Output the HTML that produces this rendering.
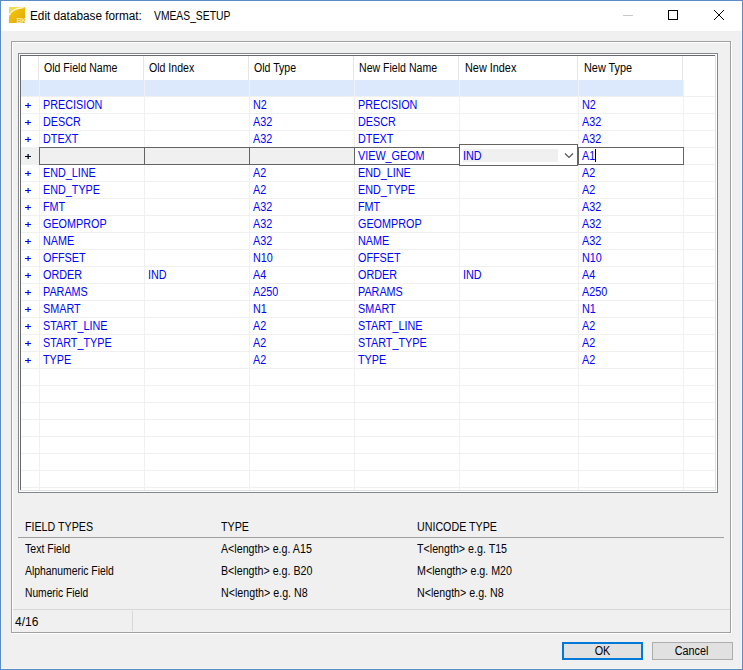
<!DOCTYPE html><html><head><meta charset="utf-8"><style>
*{margin:0;padding:0;box-sizing:border-box}
html,body{width:743px;height:670px;overflow:hidden;background:#f0f0f0}
body{position:relative;font-family:"Liberation Sans",sans-serif;font-size:11px;color:#000}
.ab{position:absolute}
.t{position:absolute;white-space:nowrap;line-height:1}
.gt{font-size:12px;color:#0000ff;transform-origin:0 0;transform:scaleX(0.9)}
.ht{font-size:12px;color:#000;transform-origin:0 0;transform:scaleX(0.88)}
.bt{font-size:12px;color:#000;transform-origin:0 0;transform:scaleX(0.89)}
</style></head><body>
<div class="ab" style="left:0;top:0;width:743px;height:670px;border:1px solid #5b8cc8"></div>
<div class="ab" style="left:1px;top:1px;width:741px;height:668px;border-left:1px solid #f7f4f0;border-right:1px solid #f7f4f0;border-bottom:1px solid #f7f4f0"></div>
<div class="ab" style="left:1px;top:1px;width:741px;height:30px;background:#fff"></div>
<svg class="ab" style="left:9px;top:7px" width="16" height="16" viewBox="0 0 16 16">
<defs><linearGradient id="ig" x1="0" y1="0" x2="1" y2="1"><stop offset="0" stop-color="#f8da48"/><stop offset="1" stop-color="#f4d040"/></linearGradient>
<linearGradient id="ig2" x1="0.1" y1="0.1" x2="0.9" y2="1"><stop offset="0" stop-color="#f4c808"/><stop offset="1" stop-color="#e2a600"/></linearGradient></defs>
<rect x="0" y="0" width="16" height="16" fill="url(#ig)"/>
<path d="M0 8.8 Q3.0 1.8 16 0.6 L16 16 L0 16 Z" fill="url(#ig2)"/>
<path d="M0.2 8.3 Q3.0 1.4 14.5 0.6" stroke="#ffffff" stroke-width="1.3" fill="none" opacity="0.9"/>
<text x="7.6" y="15.8" font-family="Liberation Sans" font-weight="bold" font-size="7" fill="#fff4dc" opacity="0.85" letter-spacing="-0.4">BK</text>
</svg>
<div class="t" style="left:30px;top:10px;font-size:12px;color:#000;transform-origin:0 0;transform:scaleX(0.98)">Edit database format:</div>
<div class="t" style="left:154px;top:10px;font-size:12px;color:#000;transform-origin:0 0;transform:scaleX(0.86)">VMEAS_SETUP</div>
<div class="ab" style="left:623px;top:15px;width:10px;height:1px;background:#c8c8c8"></div>
<div class="ab" style="left:668px;top:10px;width:10px;height:10px;border:1px solid #000"></div>
<svg class="ab" style="left:713px;top:9px" width="12" height="12" viewBox="0 0 12 12"><path d="M1 1L11 11M11 1L1 11" stroke="#000" stroke-width="1"/></svg>
<div class="ab" style="left:12px;top:42px;width:720px;height:592px;border:1px solid #fff"></div>
<div class="ab" style="left:11px;top:41px;width:720px;height:592px;border:1px solid #a0a0a0"></div>
<div class="ab" style="left:18px;top:53px;width:700px;height:440px;border:1px solid #828790;background:#fff"></div>
<div class="ab" style="left:20px;top:55px;width:695px;height:1px;background:#696969"></div>
<div class="ab" style="left:20px;top:55px;width:1px;height:435px;background:#696969"></div>
<div class="ab" style="left:715px;top:55px;width:1px;height:436px;background:#e3e3e3"></div>
<div class="ab" style="left:20px;top:490px;width:696px;height:1px;background:#e3e3e3"></div>
<div class="ab" style="left:38px;top:56px;width:1px;height:24px;background:#e5e5e5"></div>
<div class="ab" style="left:143px;top:56px;width:1px;height:24px;background:#e5e5e5"></div>
<div class="ab" style="left:248px;top:56px;width:1px;height:24px;background:#e5e5e5"></div>
<div class="ab" style="left:353px;top:56px;width:1px;height:24px;background:#e5e5e5"></div>
<div class="ab" style="left:458px;top:56px;width:1px;height:24px;background:#e5e5e5"></div>
<div class="ab" style="left:577px;top:56px;width:1px;height:24px;background:#e5e5e5"></div>
<div class="ab" style="left:682px;top:56px;width:1px;height:24px;background:#e5e5e5"></div>
<div class="ab" style="left:21px;top:80px;width:662px;height:16px;background:#dce8fc"></div>
<div class="ab" style="left:21px;top:96px;width:694px;height:1px;background:#f0f0f0"></div>
<div class="ab" style="left:21px;top:113px;width:694px;height:1px;background:#f0f0f0"></div>
<div class="ab" style="left:21px;top:130px;width:694px;height:1px;background:#f0f0f0"></div>
<div class="ab" style="left:21px;top:147px;width:694px;height:1px;background:#f0f0f0"></div>
<div class="ab" style="left:21px;top:164px;width:694px;height:1px;background:#f0f0f0"></div>
<div class="ab" style="left:21px;top:181px;width:694px;height:1px;background:#f0f0f0"></div>
<div class="ab" style="left:21px;top:198px;width:694px;height:1px;background:#f0f0f0"></div>
<div class="ab" style="left:21px;top:215px;width:694px;height:1px;background:#f0f0f0"></div>
<div class="ab" style="left:21px;top:232px;width:694px;height:1px;background:#f0f0f0"></div>
<div class="ab" style="left:21px;top:249px;width:694px;height:1px;background:#f0f0f0"></div>
<div class="ab" style="left:21px;top:266px;width:694px;height:1px;background:#f0f0f0"></div>
<div class="ab" style="left:21px;top:283px;width:694px;height:1px;background:#f0f0f0"></div>
<div class="ab" style="left:21px;top:300px;width:694px;height:1px;background:#f0f0f0"></div>
<div class="ab" style="left:21px;top:317px;width:694px;height:1px;background:#f0f0f0"></div>
<div class="ab" style="left:21px;top:334px;width:694px;height:1px;background:#f0f0f0"></div>
<div class="ab" style="left:21px;top:351px;width:694px;height:1px;background:#f0f0f0"></div>
<div class="ab" style="left:21px;top:368px;width:694px;height:1px;background:#f0f0f0"></div>
<div class="ab" style="left:21px;top:385px;width:694px;height:1px;background:#f0f0f0"></div>
<div class="ab" style="left:21px;top:402px;width:694px;height:1px;background:#f0f0f0"></div>
<div class="ab" style="left:21px;top:419px;width:694px;height:1px;background:#f0f0f0"></div>
<div class="ab" style="left:21px;top:436px;width:694px;height:1px;background:#f0f0f0"></div>
<div class="ab" style="left:21px;top:453px;width:694px;height:1px;background:#f0f0f0"></div>
<div class="ab" style="left:21px;top:470px;width:694px;height:1px;background:#f0f0f0"></div>
<div class="ab" style="left:21px;top:487px;width:694px;height:1px;background:#f0f0f0"></div>
<div class="ab" style="left:39px;top:80px;width:1px;height:410px;background:#f0f0f0"></div>
<div class="ab" style="left:144px;top:80px;width:1px;height:410px;background:#f0f0f0"></div>
<div class="ab" style="left:249px;top:80px;width:1px;height:410px;background:#f0f0f0"></div>
<div class="ab" style="left:354px;top:80px;width:1px;height:410px;background:#f0f0f0"></div>
<div class="ab" style="left:459px;top:80px;width:1px;height:410px;background:#f0f0f0"></div>
<div class="ab" style="left:578px;top:80px;width:1px;height:410px;background:#f0f0f0"></div>
<div class="ab" style="left:683px;top:80px;width:1px;height:410px;background:#f0f0f0"></div>
<div class="t ht" style="left:44px;top:62px;transform:scaleX(0.88)">Old Field Name</div>
<div class="t ht" style="left:149px;top:62px;transform:scaleX(0.88)">Old Index</div>
<div class="t ht" style="left:254px;top:62px;transform:scaleX(0.88)">Old Type</div>
<div class="t ht" style="left:359px;top:62px;transform:scaleX(0.88)">New Field Name</div>
<div class="t ht" style="left:465px;top:62px;transform:scaleX(0.905)">New Index</div>
<div class="t ht" style="left:584px;top:62px;transform:scaleX(0.905)">New Type</div>
<div class="ab" style="left:27px;top:103px;width:1px;height:5px;background:#9a80ff"></div>
<div class="ab" style="left:28px;top:103px;width:1px;height:5px;background:#2868ff"></div>
<div class="ab" style="left:25px;top:105px;width:6px;height:1px;background:#0000ff"></div>
<div class="t gt" style="left:43px;top:99px">PRECISION</div>
<div class="t gt" style="left:253px;top:99px">N2</div>
<div class="t gt" style="left:358px;top:99px">PRECISION</div>
<div class="t gt" style="left:582px;top:99px">N2</div>
<div class="ab" style="left:27px;top:120px;width:1px;height:5px;background:#9a80ff"></div>
<div class="ab" style="left:28px;top:120px;width:1px;height:5px;background:#2868ff"></div>
<div class="ab" style="left:25px;top:122px;width:6px;height:1px;background:#0000ff"></div>
<div class="t gt" style="left:43px;top:116px">DESCR</div>
<div class="t gt" style="left:253px;top:116px">A32</div>
<div class="t gt" style="left:358px;top:116px">DESCR</div>
<div class="t gt" style="left:582px;top:116px">A32</div>
<div class="ab" style="left:27px;top:137px;width:1px;height:5px;background:#9a80ff"></div>
<div class="ab" style="left:28px;top:137px;width:1px;height:5px;background:#2868ff"></div>
<div class="ab" style="left:25px;top:139px;width:6px;height:1px;background:#0000ff"></div>
<div class="t gt" style="left:43px;top:133px">DTEXT</div>
<div class="t gt" style="left:253px;top:133px">A32</div>
<div class="t gt" style="left:358px;top:133px">DTEXT</div>
<div class="t gt" style="left:582px;top:133px">A32</div>
<div class="ab" style="left:27px;top:171px;width:1px;height:5px;background:#9a80ff"></div>
<div class="ab" style="left:28px;top:171px;width:1px;height:5px;background:#2868ff"></div>
<div class="ab" style="left:25px;top:173px;width:6px;height:1px;background:#0000ff"></div>
<div class="t gt" style="left:43px;top:167px">END_LINE</div>
<div class="t gt" style="left:253px;top:167px">A2</div>
<div class="t gt" style="left:358px;top:167px">END_LINE</div>
<div class="t gt" style="left:582px;top:167px">A2</div>
<div class="ab" style="left:27px;top:188px;width:1px;height:5px;background:#9a80ff"></div>
<div class="ab" style="left:28px;top:188px;width:1px;height:5px;background:#2868ff"></div>
<div class="ab" style="left:25px;top:190px;width:6px;height:1px;background:#0000ff"></div>
<div class="t gt" style="left:43px;top:184px">END_TYPE</div>
<div class="t gt" style="left:253px;top:184px">A2</div>
<div class="t gt" style="left:358px;top:184px">END_TYPE</div>
<div class="t gt" style="left:582px;top:184px">A2</div>
<div class="ab" style="left:27px;top:205px;width:1px;height:5px;background:#9a80ff"></div>
<div class="ab" style="left:28px;top:205px;width:1px;height:5px;background:#2868ff"></div>
<div class="ab" style="left:25px;top:207px;width:6px;height:1px;background:#0000ff"></div>
<div class="t gt" style="left:43px;top:201px">FMT</div>
<div class="t gt" style="left:253px;top:201px">A32</div>
<div class="t gt" style="left:358px;top:201px">FMT</div>
<div class="t gt" style="left:582px;top:201px">A32</div>
<div class="ab" style="left:27px;top:222px;width:1px;height:5px;background:#9a80ff"></div>
<div class="ab" style="left:28px;top:222px;width:1px;height:5px;background:#2868ff"></div>
<div class="ab" style="left:25px;top:224px;width:6px;height:1px;background:#0000ff"></div>
<div class="t gt" style="left:43px;top:218px">GEOMPROP</div>
<div class="t gt" style="left:253px;top:218px">A32</div>
<div class="t gt" style="left:358px;top:218px">GEOMPROP</div>
<div class="t gt" style="left:582px;top:218px">A32</div>
<div class="ab" style="left:27px;top:239px;width:1px;height:5px;background:#9a80ff"></div>
<div class="ab" style="left:28px;top:239px;width:1px;height:5px;background:#2868ff"></div>
<div class="ab" style="left:25px;top:241px;width:6px;height:1px;background:#0000ff"></div>
<div class="t gt" style="left:43px;top:235px">NAME</div>
<div class="t gt" style="left:253px;top:235px">A32</div>
<div class="t gt" style="left:358px;top:235px">NAME</div>
<div class="t gt" style="left:582px;top:235px">A32</div>
<div class="ab" style="left:27px;top:256px;width:1px;height:5px;background:#9a80ff"></div>
<div class="ab" style="left:28px;top:256px;width:1px;height:5px;background:#2868ff"></div>
<div class="ab" style="left:25px;top:258px;width:6px;height:1px;background:#0000ff"></div>
<div class="t gt" style="left:43px;top:252px">OFFSET</div>
<div class="t gt" style="left:253px;top:252px">N10</div>
<div class="t gt" style="left:358px;top:252px">OFFSET</div>
<div class="t gt" style="left:582px;top:252px">N10</div>
<div class="ab" style="left:27px;top:273px;width:1px;height:5px;background:#9a80ff"></div>
<div class="ab" style="left:28px;top:273px;width:1px;height:5px;background:#2868ff"></div>
<div class="ab" style="left:25px;top:275px;width:6px;height:1px;background:#0000ff"></div>
<div class="t gt" style="left:43px;top:269px">ORDER</div>
<div class="t gt" style="left:148px;top:269px">IND</div>
<div class="t gt" style="left:253px;top:269px">A4</div>
<div class="t gt" style="left:358px;top:269px">ORDER</div>
<div class="t gt" style="left:463px;top:269px">IND</div>
<div class="t gt" style="left:582px;top:269px">A4</div>
<div class="ab" style="left:27px;top:290px;width:1px;height:5px;background:#9a80ff"></div>
<div class="ab" style="left:28px;top:290px;width:1px;height:5px;background:#2868ff"></div>
<div class="ab" style="left:25px;top:292px;width:6px;height:1px;background:#0000ff"></div>
<div class="t gt" style="left:43px;top:286px">PARAMS</div>
<div class="t gt" style="left:253px;top:286px">A250</div>
<div class="t gt" style="left:358px;top:286px">PARAMS</div>
<div class="t gt" style="left:582px;top:286px">A250</div>
<div class="ab" style="left:27px;top:307px;width:1px;height:5px;background:#9a80ff"></div>
<div class="ab" style="left:28px;top:307px;width:1px;height:5px;background:#2868ff"></div>
<div class="ab" style="left:25px;top:309px;width:6px;height:1px;background:#0000ff"></div>
<div class="t gt" style="left:43px;top:303px">SMART</div>
<div class="t gt" style="left:253px;top:303px">N1</div>
<div class="t gt" style="left:358px;top:303px">SMART</div>
<div class="t gt" style="left:582px;top:303px">N1</div>
<div class="ab" style="left:27px;top:324px;width:1px;height:5px;background:#9a80ff"></div>
<div class="ab" style="left:28px;top:324px;width:1px;height:5px;background:#2868ff"></div>
<div class="ab" style="left:25px;top:326px;width:6px;height:1px;background:#0000ff"></div>
<div class="t gt" style="left:43px;top:320px">START_LINE</div>
<div class="t gt" style="left:253px;top:320px">A2</div>
<div class="t gt" style="left:358px;top:320px">START_LINE</div>
<div class="t gt" style="left:582px;top:320px">A2</div>
<div class="ab" style="left:27px;top:341px;width:1px;height:5px;background:#9a80ff"></div>
<div class="ab" style="left:28px;top:341px;width:1px;height:5px;background:#2868ff"></div>
<div class="ab" style="left:25px;top:343px;width:6px;height:1px;background:#0000ff"></div>
<div class="t gt" style="left:43px;top:337px">START_TYPE</div>
<div class="t gt" style="left:253px;top:337px">A2</div>
<div class="t gt" style="left:358px;top:337px">START_TYPE</div>
<div class="t gt" style="left:582px;top:337px">A2</div>
<div class="ab" style="left:27px;top:358px;width:1px;height:5px;background:#9a80ff"></div>
<div class="ab" style="left:28px;top:358px;width:1px;height:5px;background:#2868ff"></div>
<div class="ab" style="left:25px;top:360px;width:6px;height:1px;background:#0000ff"></div>
<div class="t gt" style="left:43px;top:354px">TYPE</div>
<div class="t gt" style="left:253px;top:354px">A2</div>
<div class="t gt" style="left:358px;top:354px">TYPE</div>
<div class="t gt" style="left:582px;top:354px">A2</div>
<div class="ab" style="left:21px;top:148px;width:18px;height:16px;background:#f0f0f0"></div>
<div class="ab" style="left:27px;top:154px;width:1px;height:5px;background:#a07040"></div>
<div class="ab" style="left:28px;top:154px;width:1px;height:5px;background:#203850"></div>
<div class="ab" style="left:25px;top:156px;width:6px;height:1px;background:#000"></div>
<div class="ab" style="left:39px;top:147px;width:106px;height:18px;border:1px solid #646464;background:#f0f0f0"></div>
<div class="ab" style="left:144px;top:147px;width:106px;height:18px;border:1px solid #646464;background:#f0f0f0"></div>
<div class="ab" style="left:249px;top:147px;width:106px;height:18px;border:1px solid #646464;background:#f0f0f0"></div>
<div class="ab" style="left:354px;top:147px;width:106px;height:18px;border:1px solid #646464;background:#fff"></div>
<div class="t gt" style="left:358px;top:150px">VIEW_GEOM</div>
<div class="ab" style="left:459px;top:144px;width:119px;height:22px;border:1px solid #646464;background:#fff"></div>
<div class="ab" style="left:463px;top:149px;width:95px;height:13px;background:#f0f0f0"></div>
<div class="t gt" style="left:463px;top:150px">IND</div>
<svg class="ab" style="left:564px;top:152px" width="10" height="7" viewBox="0 0 10 7"><path d="M1 1.5L5 5.5L9 1.5" stroke="#505050" stroke-width="1.1" fill="none"/></svg>
<div class="ab" style="left:578px;top:147px;width:106px;height:18px;border:1px solid #646464;background:#fff"></div>
<div class="t gt" style="left:582px;top:150px">A1</div>
<div class="ab" style="left:595px;top:149px;width:1px;height:13px;background:#000"></div>
<div class="t bt" style="left:25px;top:521px">FIELD TYPES</div>
<div class="t bt" style="left:221px;top:521px">TYPE</div>
<div class="t bt" style="left:417px;top:521px">UNICODE TYPE</div>
<div class="ab" style="left:18px;top:537px;width:706px;height:1px;background:#a0a0a0"></div>
<div class="t bt" style="left:25px;top:543px;transform:scaleX(0.88)">Text Field</div>
<div class="t bt" style="left:221px;top:543px">A&lt;length&gt; e.g. A15</div>
<div class="t bt" style="left:417px;top:543px">T&lt;length&gt; e.g. T15</div>
<div class="t bt" style="left:25px;top:565px;transform:scaleX(0.865)">Alphanumeric Field</div>
<div class="t bt" style="left:221px;top:565px">B&lt;length&gt; e.g. B20</div>
<div class="t bt" style="left:417px;top:565px">M&lt;length&gt; e.g. M20</div>
<div class="t bt" style="left:25px;top:587px;transform:scaleX(0.855)">Numeric Field</div>
<div class="t bt" style="left:221px;top:587px">N&lt;length&gt; e.g. N8</div>
<div class="t bt" style="left:417px;top:587px">N&lt;length&gt; e.g. N8</div>
<div class="ab" style="left:13px;top:609px;width:717px;height:1px;background:#d7d7d7"></div>
<div class="ab" style="left:132px;top:611px;width:1px;height:20px;background:#d7d7d7"></div>
<div class="t" style="left:15px;top:616px;font-size:12px">4/16</div>
<div class="ab" style="left:562px;top:642px;width:81px;height:18px;border:2px solid #0078d7;background:#e1e1e1"></div>
<div class="t" style="left:562px;top:645px;width:81px;text-align:center;font-size:12px;transform:scaleX(0.9)">OK</div>
<div class="ab" style="left:652px;top:642px;width:81px;height:18px;border:1px solid #adadad;background:#e1e1e1"></div>
<div class="t" style="left:651px;top:645px;width:81px;text-align:center;font-size:12px;transform:scaleX(0.9)">Cancel</div>
</body></html>
